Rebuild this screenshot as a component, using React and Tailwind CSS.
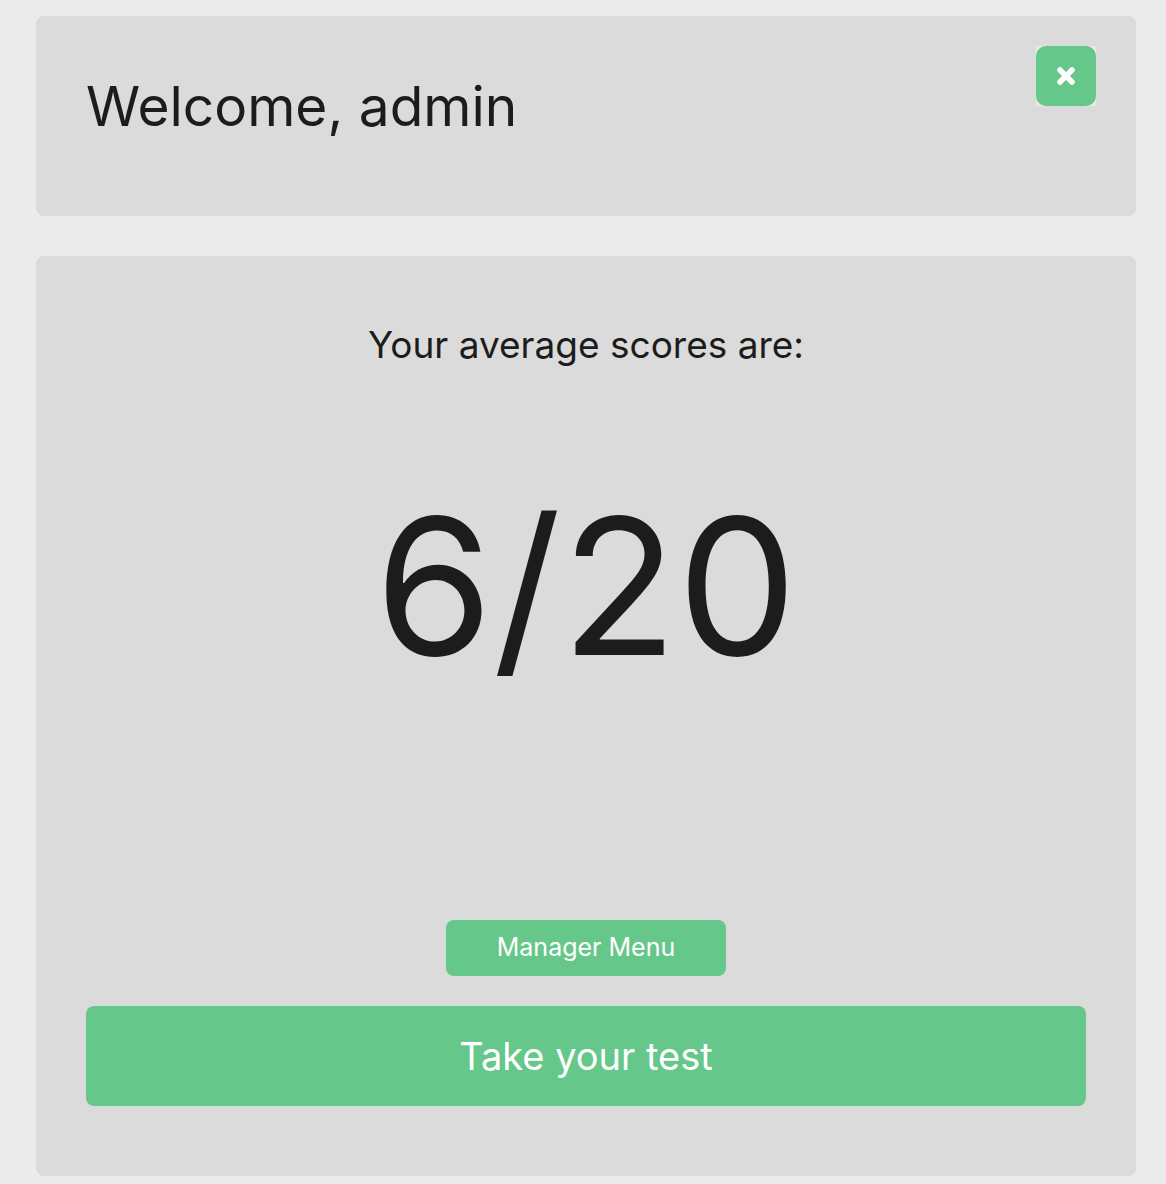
import React from "react";

const CloseIcon = () => (
  <svg width="20" height="20" viewBox="0 0 20 20">
    <path d="M4 4L16 16M16 4L4 16" stroke="#fff" strokeWidth="5.5" strokeLinecap="round" />
  </svg>
);

export default function App() {
  return (
    <div className="min-h-screen bg-[#ebebeb] pl-9 pr-[30px] pt-4 pb-2 text-[#1c1c1c]" style={{ fontFamily: "Inter, 'Noto Sans', sans-serif" }}>
      {/* Header card */}
      <div className="h-[200px] rounded-lg bg-[#dbdbdb] flex justify-between pl-[50px] pr-10 pt-[30px]">
        <h1 className="text-[55px] leading-none font-normal pt-[33px]">Welcome, admin</h1>
        <div className="w-[60px] h-[60px] bg-[#e9e9e9]">
          <button className="w-full h-full rounded-[10px] bg-[#65c78a] flex items-center justify-center">
            <CloseIcon />
          </button>
        </div>
      </div>

      {/* Scores card */}
      <div className="mt-10 h-[920px] rounded-lg bg-[#dbdbdb] px-[50px] pt-[70px] pb-[70px] flex flex-col items-center">
        <p className="text-[37px] leading-none">Your average scores are:</p>
        <div className="mt-[128px] text-[190px] leading-none">6/20</div>
        <div className="flex-1" />
        <button className="w-[280px] h-14 rounded-lg bg-[#65c78a] text-white text-[25px]">Manager Menu</button>
        <button className="mt-[30px] w-full h-[100px] rounded-lg bg-[#65c78a] text-white text-[38px]">Take your test</button>
      </div>
    </div>
  );
}
